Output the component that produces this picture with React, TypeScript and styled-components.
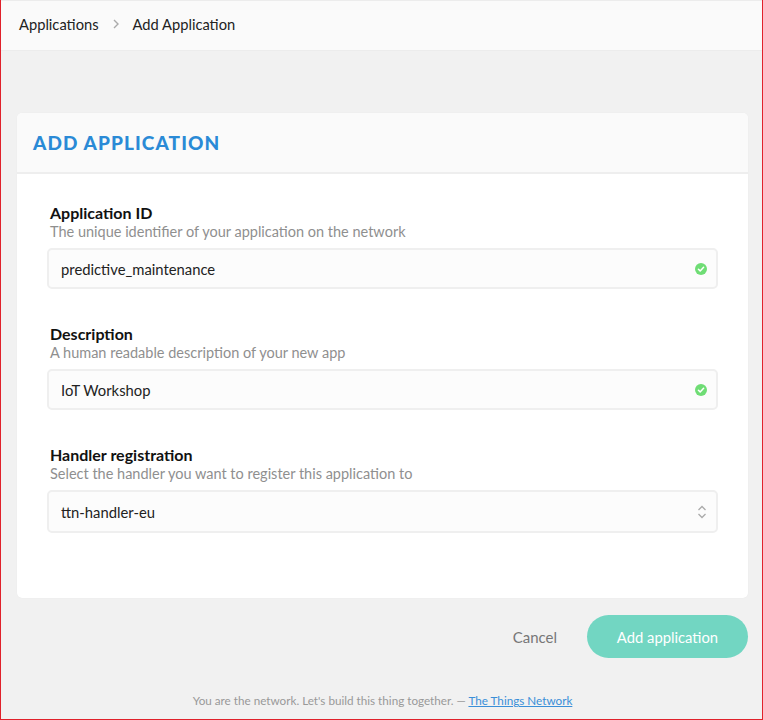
import React from 'react';
import styled, { createGlobalStyle } from 'styled-components';

const GlobalStyle = createGlobalStyle`
  html, body {
    margin: 0;
    padding: 0;
    background: #f1f1f1;
  }
  * {
    box-sizing: border-box;
  }
  body {
    font-family: Lato, "Noto Sans", sans-serif;
    color: #222;
  }
`;

const Frame = styled.div`
  height: 720px;
  border-left: 1px solid #e0212b;
  border-right: 1px solid #e0212b;
  border-bottom: 1px solid #e0212b;
  display: flex;
  flex-direction: column;
`;

const TopBar = styled.header`
  height: 51px;
  background: #fafafa;
  border-top: 1px solid #ececec;
  border-bottom: 1px solid #ececec;
  display: flex;
  align-items: center;
  padding: 0 18px 3px;
  gap: 12px;
  font-size: 14.7px;
`;

const Crumb = styled.span`
  color: #222;
`;

const Chevron = styled.svg`
  width: 10px;
  height: 10px;
`;

const Main = styled.main`
  flex: 1;
  padding: 62px 14px 0 16px;
  display: flex;
  flex-direction: column;
`;

const Card = styled.section`
  background: #fff;
  border-radius: 5px;
  overflow: hidden;
  box-shadow: 0 0 1px rgba(0, 0, 0, 0.08);
`;

const CardHeader = styled.div`
  height: 61px;
  background: #fafafa;
  border-bottom: 2px solid #eeeeee;
  display: flex;
  align-items: center;
  padding: 0 16px;
`;

const Title = styled.h1`
  margin: 0;
  font-size: 19px;
  font-weight: 900;
  letter-spacing: 1.1px;
  color: #2a8ad6;
  text-transform: uppercase;
`;

const CardBody = styled.div`
  padding: 29px 30px 65px;
  display: flex;
  flex-direction: column;
  gap: 35px;
`;

const Field = styled.div`
  display: flex;
  flex-direction: column;
`;

const Label = styled.label`
  padding-left: 3px;
  font-size: 16px;
  font-weight: 700;
  line-height: 19px;
  color: #111;
`;

const Hint = styled.div`
  padding: 1px 0 0 3px;
  font-size: 14.5px;
  line-height: 18px;
  color: #8f8f8f;
  margin-bottom: 7px;
`;

const InputBox = styled.div<{ $tall?: boolean }>`
  height: ${(p) => (p.$tall ? 43 : 41)}px;
  background: #fcfcfc;
  border: 2px solid #efefef;
  border-radius: 5px;
  display: flex;
  align-items: center;
  justify-content: space-between;
  padding: ${(p) => (p.$tall ? '0 8px 0 12px' : '0 9px 0 12px')};
  font-size: 14.8px;
  color: #222;
`;

const Value = styled.span``;

const Check = styled.svg`
  width: 12px;
  height: 12px;
`;

const Arrows = styled.svg`
  width: 12px;
  height: 16px;
`;

const Actions = styled.div`
  display: flex;
  justify-content: flex-end;
  align-items: center;
  gap: 30px;
  margin-top: 17px;
`;

const CancelButton = styled.button`
  border: none;
  background: none;
  font-family: inherit;
  font-size: 15px;
  color: #777;
  padding: 0;
  cursor: pointer;
`;

const SubmitButton = styled.button`
  width: 161px;
  height: 43px;
  border: none;
  border-radius: 22px;
  background: #72d6c2;
  color: #fff;
  font-family: inherit;
  font-size: 14.8px;
  cursor: pointer;
`;

const Footer = styled.footer`
  margin-top: auto;
  padding-bottom: 12px;
  text-align: center;
  font-size: 11.7px;
  color: #999;
`;

const FooterLink = styled.a`
  color: #3a8fd8;
  text-decoration: underline;
`;

const CheckIcon = () => (
  <Check viewBox="0 0 12 12">
    <circle cx="6" cy="6" r="6" fill="#6fdd75" />
    <path d="M3.4 6.2 L5.2 7.9 L8.6 4.3" stroke="#fff" strokeWidth="1.5" fill="none" strokeLinecap="round" strokeLinejoin="round" />
  </Check>
);

const SelectArrows = () => (
  <Arrows viewBox="0 0 12 16">
    <path d="M2.5 6 L6 2.5 L9.5 6" stroke="#aaa" strokeWidth="1.3" fill="none" />
    <path d="M2.5 10 L6 13.5 L9.5 10" stroke="#aaa" strokeWidth="1.3" fill="none" />
  </Arrows>
);

const App = () => {
  return (
    <>
      <GlobalStyle />
      <Frame>
        <TopBar>
          <Crumb>Applications</Crumb>
          <Chevron viewBox="0 0 10 10">
            <path d="M3 1 L7 5 L3 9" stroke="#aaa" strokeWidth="1.4" fill="none" />
          </Chevron>
          <Crumb>Add Application</Crumb>
        </TopBar>
        <Main>
          <Card>
            <CardHeader>
              <Title>Add Application</Title>
            </CardHeader>
            <CardBody>
              <Field>
                <Label>Application ID</Label>
                <Hint>The unique identifier of your application on the network</Hint>
                <InputBox>
                  <Value>predictive_maintenance</Value>
                  <CheckIcon />
                </InputBox>
              </Field>
              <Field>
                <Label>Description</Label>
                <Hint>A human readable description of your new app</Hint>
                <InputBox>
                  <Value>IoT Workshop</Value>
                  <CheckIcon />
                </InputBox>
              </Field>
              <Field>
                <Label>Handler registration</Label>
                <Hint>Select the handler you want to register this application to</Hint>
                <InputBox $tall>
                  <Value>ttn-handler-eu</Value>
                  <SelectArrows />
                </InputBox>
              </Field>
            </CardBody>
          </Card>
          <Actions>
            <CancelButton>Cancel</CancelButton>
            <SubmitButton>Add application</SubmitButton>
          </Actions>
          <Footer>
            You are the network. Let's build this thing together. — <FooterLink href="#">The Things Network</FooterLink>
          </Footer>
        </Main>
      </Frame>
    </>
  );
};

export default App;
